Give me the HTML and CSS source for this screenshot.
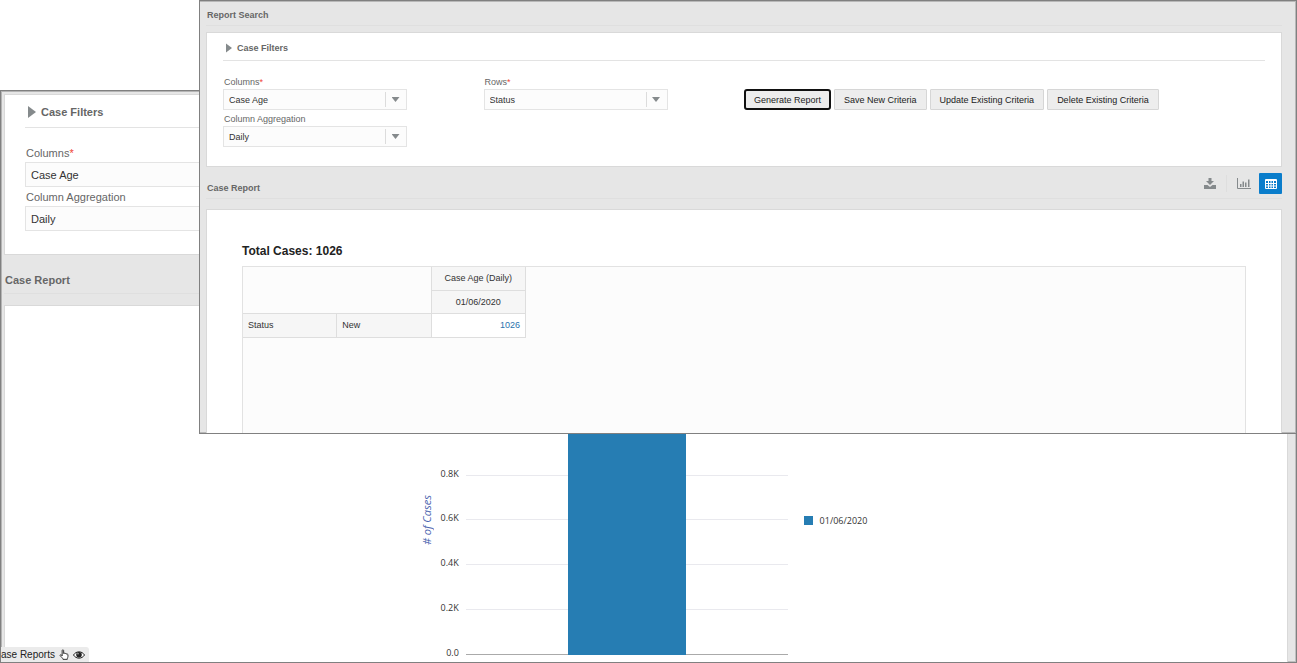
FILE: index.html
```html
<!DOCTYPE html>
<html lang="en">
<head>
<meta charset="utf-8">
<title>Case Reports</title>
<link rel="stylesheet" href="styles.css">
</head>
<body>
<div class="stage">
  <main class="window window-back">
    <section class="panel filters">
      <h3 class="filters-title"><svg class="twisty" viewBox="0 0 8 12" aria-hidden="true"><path d="M0 0L8 6L0 12Z"/></svg>Case Filters</h3>
      <div class="fields">
        <div class="field-col">
          <label for="back-columns">Columns<span class="req">*</span></label>
          <div class="picker"><select id="back-columns"><option>Case Age</option></select></div>
          <label for="back-agg">Column Aggregation</label>
          <div class="picker"><select id="back-agg"><option>Daily</option></select></div>
        </div>
      </div>
    </section>
    <div class="section-head"><h2>Case Report</h2></div>
    <section class="panel chart-panel">
      <div class="chart">
        <div class="axis-title">
          <span># of Cases</span>
        </div>
        <div class="axis">
          <div></div><div></div>
          <div><span>0.8K</span></div>
          <div><span>0.6K</span></div>
          <div><span>0.4K</span></div>
          <div><span>0.2K</span></div>
          <div><span>0.0</span></div>
        </div>
        <div class="plot">
          <div class="grid-lines"><i></i><i></i><i></i><i></i><i></i><i></i></div>
          <div class="bar" style="height:85.5%"></div>
        </div>
        <div class="legend"><i class="swatch"></i>01/06/2020</div>
      </div>
    </section>
    <div class="tab-label">ase Reports
      <svg class="hand" viewBox="0 0 10 12" aria-hidden="true"><path d="M3 7.500V1.700C3 .6 4.600.6 4.600 1.700V5C5 4.200 6.200 4.400 6.200 5.200C6.800 4.500 7.800 4.800 7.800 5.600C8.500 5.200 9.300 5.600 9.300 6.400V8.200C9.300 9.300 8.600 9.700 8.600 11.300H3.900C3.800 10 2.200 9 .9 7.400C.3 6.400 1.600 5.800 2.200 6.500Z"/></svg>
      <svg class="eye" viewBox="0 0 12 8" aria-hidden="true"><path d="M.5 4C3-.2 9-.2 11.500 4C9 8.200 3 8.200 .5 4Z" fill="#fff" stroke="#222"/><circle cx="6" cy="3.800" r="2.800" fill="#222"/><circle cx="5" cy="2.800" r=".8" fill="#bbb"/></svg>
    </div>
  </main>

  <main class="window window-front">
    <div class="section-head"><h2>Report Search</h2></div>
    <section class="panel filters">
      <h3 class="filters-title"><svg class="twisty" viewBox="0 0 8 12" aria-hidden="true"><path d="M0 0L8 6L0 12Z"/></svg>Case Filters</h3>
      <div class="fields">
        <div class="field-col">
          <label for="columns">Columns<span class="req">*</span></label>
          <div class="picker"><select id="columns"><option>Case Age</option></select></div>
          <label for="agg">Column Aggregation</label>
          <div class="picker"><select id="agg"><option>Daily</option></select></div>
        </div>
        <div class="field-col">
          <label for="rows">Rows<span class="req">*</span></label>
          <div class="picker"><select id="rows"><option>Status</option></select></div>
        </div>
        <div class="actions">
          <button class="btn primary">Generate Report</button>
          <button class="btn">Save New Criteria</button>
          <button class="btn">Update Existing Criteria</button>
          <button class="btn">Delete Existing Criteria</button>
        </div>
      </div>
    </section>
    <div class="section-head report-head">
      <h2>Case Report</h2>
      <div class="tools">
        <button class="tool" aria-label="Download"><svg width="12" height="11" viewBox="0 0 12 11"><path d="M4.500 0H7.500V3H10L6 7L2 3H4.500Z M0 7H3.500L6 9L8.500 7H12V11H0Z" fill="#858a8c"/></svg></button>
        <span class="divider"></span>
        <button class="tool" aria-label="Chart view"><svg width="14" height="11" viewBox="0 0 14 11"><path d="M.5 0V10.500H14" fill="none" stroke="#858a8c"/><path d="M3 6H4.500V9H3ZM5.500 3.500H7V9H5.500ZM8 4.500H9.500V9H8ZM11 1.500H12.500V9H11Z" fill="#858a8c"/></svg></button>
        <button class="tool active" aria-label="Table view"><svg width="12" height="10" viewBox="0 0 12 10"><rect width="12" height="10" rx="1" fill="#fff"/><path d="M1 2H3V4H1ZM4 2H5.500V4H4ZM6.500 2H8V4H6.500ZM9 2H11V4H9ZM1 5H3V6.500H1ZM4 5H5.500V6.500H4ZM6.500 5H8V6.500H6.500ZM9 5H11V6.500H9ZM1 7.500H3V9H1ZM4 7.500H5.500V9H4ZM6.500 7.500H8V9H6.500ZM9 7.500H11V9H9Z" fill="#0a7dcb"/></svg></button>
      </div>
    </div>
    <section class="panel report">
      <h3 class="total">Total Cases: 1026</h3>
      <div class="table-area">
        <table>
          <thead>
            <tr><td colspan="2" rowspan="2" class="corner"></td><th scope="col">Case Age (Daily)</th></tr>
            <tr><th scope="col">01/06/2020</th></tr>
          </thead>
          <tbody>
            <tr><th scope="row" class="side">Status</th><th scope="row" class="side">New</th><td class="value"><a href="#">1026</a></td></tr>
          </tbody>
        </table>
      </div>
    </section>
  </main>
</div>
</body>
</html>
```

FILE: styles.css
```css
* { box-sizing: border-box; }
body { margin: 0; background: #fff; font-family: "Liberation Sans", Arial, sans-serif; color: #333; }
h2, h3 { margin: 0; }
button, select { font: inherit; color: inherit; }

.stage { position: relative; min-height: 100vh; display: flex; flex-direction: column; padding-top: 90px; overflow: hidden; }
.window { background: #e6e6e6; border: 1px solid #808080; }
.window-back { position: relative; flex: 1; display: flex; flex-direction: column; padding: 3px 8px 0 3px; font-size: 11px; box-shadow: inset 1px 1px #b4b4b4, inset -1px -1px #c0c0c0; }
.window-front { position: absolute; top: 0; left: 199px; right: 0; padding: 0 14px 0 6px; font-size: 9px; box-shadow: inset 0 1px #b8b8b8, inset -1px -1px #b8b8b8; }
.panel { background: #fff; border: 1px solid #d9d9d9; }

.section-head { display: flex; align-items: center; justify-content: space-between; height: 25px; margin-bottom: 6px; padding-top: 3px; border-bottom: 1px solid #dfdfdf; color: #666; }
.section-head h2 { padding-left: 1px; font-size: inherit; line-height: 12px; }
.report-head { height: 32px; margin-bottom: 10px; padding-top: 2px; }
.report-head h2 { padding-top: 8px; }
.window-back .section-head { height: 39px; margin-bottom: 11px; padding-top: 12px; }

.filters { padding: 0 16px 19px; }
.filters-title { display: flex; align-items: center; gap: 5px; height: 28px; padding: 2px 0 0 3px; border-bottom: 1px solid #e3e3e3; color: #666; font-size: inherit; }
.twisty { width: 6px; height: 10px; fill: #858a8c; }
.fields { display: grid; grid-template-columns: repeat(4, 1fr); padding-top: 15px; }
.field-col { display: flex; flex-direction: column; }
.field-col label { line-height: 12px; color: #666; padding-left: 1px; margin-bottom: 1px; }
.req { color: #f04438; }
.picker { display: grid; grid-template-columns: 1fr 21px; align-items: center; width: 184px; height: 21px; margin-bottom: 3px; border: 1px solid #e4e4e4; background: #fcfcfc; }
.picker select { grid-area: 1 / 1 / 2 / 3; width: 100%; height: 100%; padding: 0 5px; appearance: none; border: 0; background: transparent; }
.picker::after { content: ""; grid-area: 1 / 2; justify-self: center; width: 8px; height: 5px; background: #858a8c; clip-path: polygon(0 0, 100% 0, 50% 100%); pointer-events: none; }
.picker::before { content: ""; grid-area: 1 / 2; width: 1px; height: 15px; background: #dcdcdc; pointer-events: none; }
.fields .field-col .picker:last-child { margin-bottom: 0; }

.window-back .filters { padding: 0 20px 23px; }
.window-back .filters-title { height: 33px; gap: 5px; padding: 2px 0 0 3px; }
.window-back .twisty { width: 8px; height: 12px; }
.window-back .fields { padding-top: 18px; }
.window-back label { line-height: 14px; margin-bottom: 2px; }
.window-back .picker { width: 220px; height: 25px; margin-bottom: 3px; }

.actions { grid-column: span 2; display: flex; gap: 3px; padding-top: 13px; }
.btn { height: 21px; padding: 0 9px; border: 1px solid #d6d6d6; border-radius: 1px; background: #ededed; color: #222; white-space: nowrap; }
.btn.primary { padding: 0 8px; border: 2px solid #111; border-radius: 3px; }

.tools { display: flex; align-items: center; }
.tool { display: flex; align-items: center; justify-content: center; width: 23px; height: 21px; padding: 0; border: 0; border-radius: 1px; background: transparent; }
.tool.active { background: #0a7dcb; margin-left: 4px; }
.divider { width: 1px; height: 17px; margin: 0 5px; background: #dedede; }

.report { padding: 34px 35px 0; border-bottom: 0; }
.total { height: 22px; font-size: 12px; line-height: 14px; color: #222; }
.table-area { min-height: 167px; border: 1px solid #e2e2e2; border-bottom: 0; background: #fcfcfc; }
table { border-collapse: separate; border-spacing: 0; table-layout: fixed; width: 283px; }
th, td { height: 24px; padding: 0 5px 1px; border-right: 1px solid #dedede; border-bottom: 1px solid #dedede; font-weight: normal; text-align: center; }
thead tr:last-child th { height: 23px; }
thead th { background: #f6f6f6; }
.side { background: #f6f6f6; text-align: left; }
.value { background: #fff; text-align: right; }
.value a { color: #2a72ad; text-decoration: none; }

.chart-panel { flex: 1; padding: 80px 4px 7px 0; border-bottom: 0; }
.chart { display: flex; justify-content: center; align-items: center; height: 269px; font-family: "Open Sans", "Noto Sans", sans-serif; font-size: 9px; }
.axis-title { writing-mode: vertical-rl; transform: rotate(180deg); font-size: 11px; line-height: 12px; font-style: italic; color: #4f67b0; margin-right: 8px; }
.axis { align-self: stretch; display: grid; grid-template-rows: 0 repeat(6, 1fr); width: 18px; }
.axis div { display: flex; align-items: flex-end; justify-content: flex-end; }
.axis span { line-height: 12px; margin-bottom: -4px; }
.plot { align-self: stretch; display: grid; justify-items: center; width: 322px; margin: 0 16px 0 7px; }
.grid-lines { grid-area: 1 / 1; display: flex; flex-direction: column; width: 100%; }
.grid-lines i { flex: 1; border-bottom: 1px solid #e9e9ee; }
.grid-lines i:last-child { border-color: #aaa; }
.bar { grid-area: 1 / 1; align-self: end; width: 118px; background: #267db3; }
.legend { display: flex; align-items: center; gap: 7px; }
.swatch { width: 9px; height: 9px; background: #267db3; }

.tab-label { position: absolute; left: 0; bottom: 0; display: flex; align-items: center; gap: 4px; height: 15px; padding-right: 4px; border-radius: 0 3px 0 0; background: #ebebeb; font-size: 10px; color: #222; }
.hand { width: 10px; height: 11px; fill: #fff; stroke: #222; stroke-width: 1; }
.eye { width: 12px; height: 8px; }
```
